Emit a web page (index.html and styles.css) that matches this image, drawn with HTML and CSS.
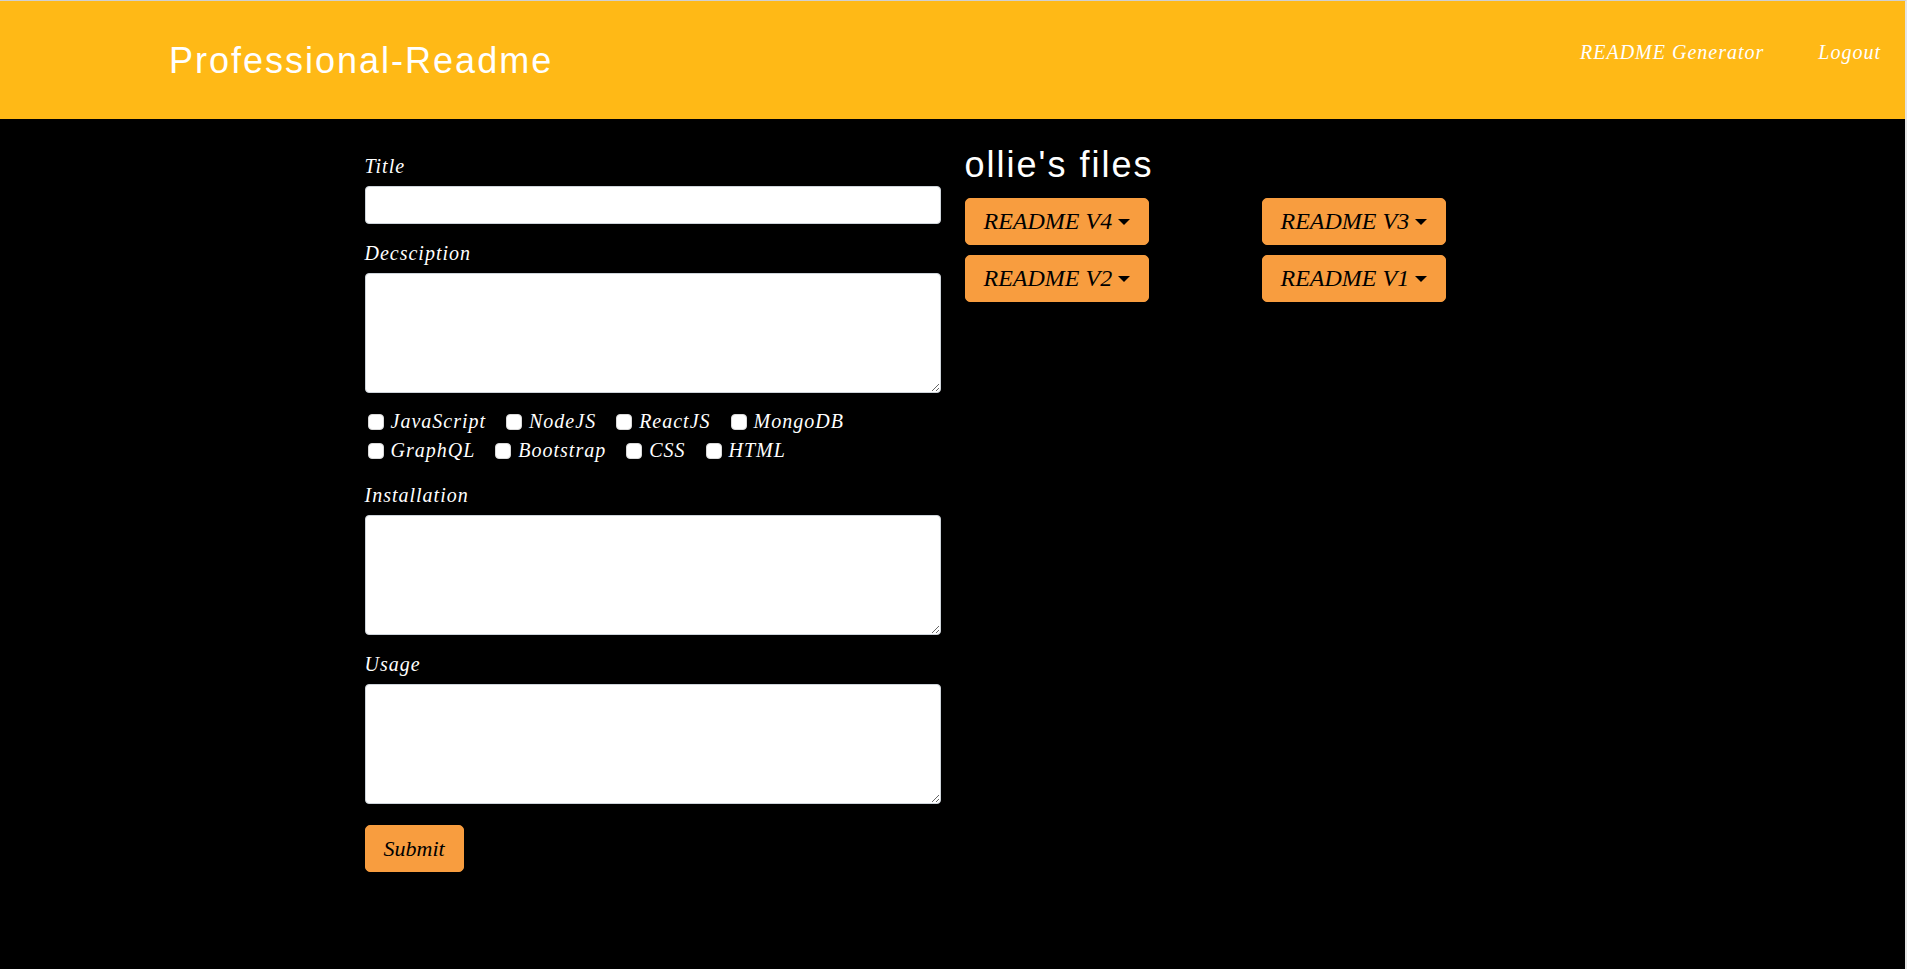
FILE: index.html
```html
<!DOCTYPE html>
<html lang="en">
<head>
  <meta charset="utf-8">
  <meta name="viewport" content="width=device-width, initial-scale=1">
  <title>Professional-Readme</title>
  <link rel="stylesheet" href="styles.css">
</head>
<body>
  <header class="navbar">
    <h1 class="brand">Professional-Readme</h1>
    <nav class="nav-links">
      <a href="#generator">README Generator</a>
      <a href="#logout">Logout</a>
    </nav>
  </header>
  <main class="container">
    <form class="readme-form" id="generator">
      <div class="form-group">
        <label for="title">Title</label>
        <input class="form-control" type="text" id="title">
      </div>
      <div class="form-group">
        <label for="description">Decsciption</label>
        <textarea class="form-control" id="description"></textarea>
      </div>
      <div class="checks">
        <div class="check-row">
          <label class="check"><input type="checkbox">JavaScript</label>
          <label class="check"><input type="checkbox">NodeJS</label>
          <label class="check"><input type="checkbox">ReactJS</label>
          <label class="check"><input type="checkbox">MongoDB</label>
        </div>
        <div class="check-row">
          <label class="check"><input type="checkbox">GraphQL</label>
          <label class="check"><input type="checkbox">Bootstrap</label>
          <label class="check"><input type="checkbox">CSS</label>
          <label class="check"><input type="checkbox">HTML</label>
        </div>
      </div>
      <div class="form-group">
        <label for="installation">Installation</label>
        <textarea class="form-control" id="installation"></textarea>
      </div>
      <div class="form-group">
        <label for="usage">Usage</label>
        <textarea class="form-control" id="usage"></textarea>
      </div>
      <button class="btn" type="submit">Submit</button>
    </form>
    <section class="files">
      <h2 class="files-title">ollie's files</h2>
      <div class="files-grid">
        <button class="btn dropdown" type="button">README V4<span class="caret"></span></button>
        <button class="btn dropdown" type="button">README V3<span class="caret"></span></button>
        <button class="btn dropdown" type="button">README V2<span class="caret"></span></button>
        <button class="btn dropdown" type="button">README V1<span class="caret"></span></button>
      </div>
    </section>
  </main>
</body>
</html>
```
FILE: styles.css
```css
*,
*::before,
*::after {
  box-sizing: border-box;
}

body {
  margin: 0;
  min-height: 100vh;
  background: #000;
  color: #fff;
  border-top: 1px solid #d0d0d0;
  border-right: 2px solid #e4e4e4;
  font-family: "Apple Chancery", "Liberation Serif", serif;
  font-style: italic;
  font-size: 20px;
  line-height: 27px;
  letter-spacing: 1px;
}

.navbar {
  display: flex;
  justify-content: space-between;
  align-items: flex-start;
  padding: 38px 24px 37px 169px;
  background: #ffb916;
}

.brand,
.files-title {
  margin: 0;
  font-family: "Liberation Sans", Arial, sans-serif;
  font-style: normal;
  font-weight: 400;
  font-size: 36px;
  line-height: 43px;
  letter-spacing: 2px;
}

.nav-links {
  display: flex;
  gap: 54px;
}

.nav-links a {
  color: #fff;
  text-decoration: none;
}

.container {
  display: grid;
  grid-template-columns: 1fr 1fr;
  gap: 24px;
  max-width: 1200px;
  margin: 0 auto;
  padding: 24px 12px;
}

.readme-form {
  padding-top: 10px;
}

.form-group {
  margin-bottom: 16px;
}

.form-group label {
  display: block;
  margin-bottom: 6px;
}

.form-control {
  display: block;
  width: 100%;
  height: 38px;
  padding: 6px 12px;
  background: #fff;
  border: 1px solid #ced4da;
  border-radius: 4px;
  font: inherit;
}

textarea.form-control {
  height: 120px;
  resize: vertical;
}

.checks {
  margin: -2px 0 17px;
}

.check-row {
  display: flex;
  flex-wrap: wrap;
  gap: 20px;
  padding-left: 3px;
  line-height: 29px;
}

.check {
  display: flex;
  align-items: center;
  gap: 7px;
}

.check input {
  appearance: none;
  width: 16px;
  height: 16px;
  margin: 0;
  background: #fff;
  border: 1px solid #d8d8d8;
  border-radius: 4px;
}

.check input:checked {
  background: #f89d3f;
}

.btn {
  padding: 8px 18px;
  background: #f89d3f;
  color: #000;
  border: 1px solid #f89d3f;
  border-radius: 5px;
  font-family: inherit;
  font-style: italic;
  font-size: 22px;
  line-height: 29px;
}

.readme-form .btn {
  margin-top: 5px;
}

.files-title {
  margin-bottom: 12px;
}

.files-grid {
  display: grid;
  grid-template-columns: 1fr 1fr;
  gap: 10px 18px;
  justify-items: start;
}

.dropdown {
  display: flex;
  align-items: center;
  gap: 6px;
  font-size: 24px;
}

.caret {
  border-top: 6px solid #000;
  border-right: 6px solid transparent;
  border-left: 6px solid transparent;
}
```
